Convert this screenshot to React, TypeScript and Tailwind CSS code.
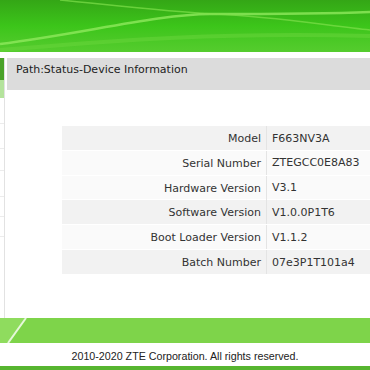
const rows: { label: string; value: string; shade: boolean }[] = [
  { label: "Model", value: "F663NV3A", shade: true },
  { label: "Serial Number", value: "ZTEGCC0E8A83", shade: false },
  { label: "Hardware Version", value: "V3.1", shade: false },
  { label: "Software Version", value: "V1.0.0P1T6", shade: true },
  { label: "Boot Loader Version", value: "V1.1.2", shade: false },
  { label: "Batch Number", value: "07e3P1T101a4", shade: true },
];

function Header() {
  return (
    <div className="relative h-[52px] w-full overflow-hidden bg-gradient-to-b from-[#34a616] via-[#3cc51a] to-[#55cc2e]">
      <svg className="absolute inset-0" width="370" height="52" viewBox="0 0 370 52">
        <path d="M0 44 C 80 34, 160 14, 210 14 C 260 14, 320 14, 370 12" stroke="#8ee85c" strokeWidth="2.5" fill="none" opacity="0.8" />
        <path d="M60 0 C 120 6, 170 12, 215 14 C 270 16, 330 26, 370 30" stroke="#7fe04c" strokeWidth="1.5" fill="none" opacity="0.7" />
        <path d="M0 50 C 100 42, 200 32, 370 36" stroke="#6ad63c" strokeWidth="4" fill="none" opacity="0.5" />
      </svg>
    </div>
  );
}

function Sidebar() {
  return (
    <div className="flex w-[5px] shrink-0 flex-col border-r border-[#e2e2e2]">
      <div className="h-[22px] bg-[#4aa32a]" />
      <div className="h-[18px] bg-[#b4e39c]" />
      <div className="h-[26px] border-b border-[#ececec]" />
      <div className="h-[25px] border-b border-[#ececec]" />
      <div className="h-[22px] border-b border-[#ececec]" />
      <div className="h-[26px] border-b border-[#ececec]" />
      <div className="h-[20px] border-b border-[#ececec]" />
      <div className="h-[20px] border-b border-[#ececec]" />
    </div>
  );
}

export default function App() {
  return (
    <div className="flex h-[370px] w-[370px] flex-col overflow-hidden bg-white">
      <Header />
      <div className="flex h-[266px] pt-[6px]">
        <Sidebar />
        <div className="flex flex-1 flex-col pl-[2px]">
          <div className="flex h-[32px] items-start bg-[#dcdcdc] pl-[9px] pt-[4px] font-['DejaVu_Sans',sans-serif] text-[11px] text-[#222]">
            Path:Status-Device Information
          </div>
          <div className="pl-[55px] pt-[36px]">
            <div className="flex flex-col font-['DejaVu_Sans',sans-serif] text-[11px] text-[#333]">
              {rows.map((r) => (
                <div
                  key={r.label}
                  className={`flex h-[24.8px] items-center border-b border-white ${r.shade ? "bg-[#f2f2f2]" : "bg-[#fafafa]"}`}
                >
                  <div className="w-[205px] border-r border-[#e4e4e4] pr-[5px] pt-[2px] text-right leading-[22px]">{r.label}</div>
                  <div className="pl-[5px] pt-[2px]">{r.value}</div>
                </div>
              ))}
            </div>
          </div>
        </div>
      </div>
      <div className="relative h-[25px] bg-[#7ed44a]">
        <svg className="absolute inset-0" width="370" height="25" viewBox="0 0 370 25">
          <polygon points="0,0 26,0 8,25 0,25" fill="#8fdc5e" />
          <line x1="26" y1="0" x2="8" y2="25" stroke="#e6f7da" strokeWidth="2" />
        </svg>
      </div>
      <div className="flex h-[23px] items-center justify-center pt-[4px] font-['Liberation_Sans',sans-serif] text-[10.7px] text-[#222]">
        2010-2020 ZTE Corporation. All rights reserved.
      </div>
      <div className="h-[4px] bg-[#57b530]" />
    </div>
  );
}
